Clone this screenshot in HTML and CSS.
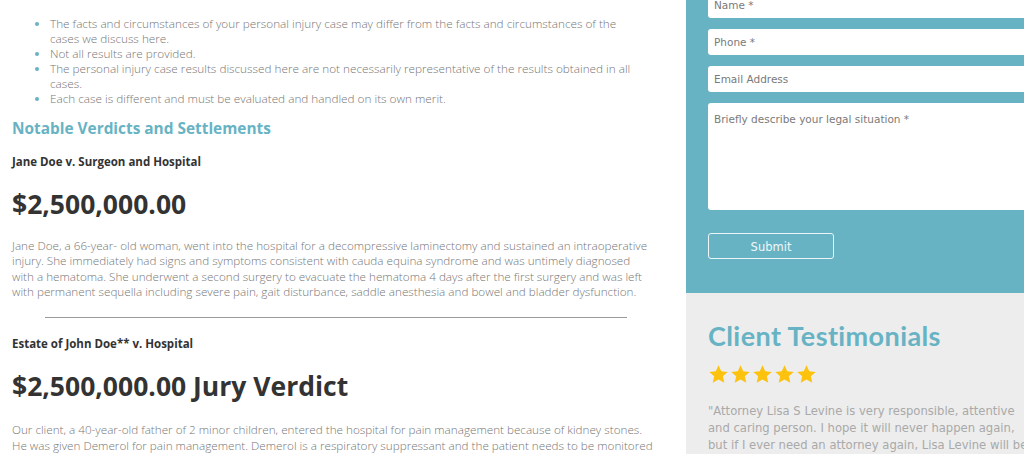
FILE: index.html
```html
<!DOCTYPE html>
<html>
<head>
<meta charset="utf-8">
<link rel="stylesheet" href="styles.css">
</head>
<body>
<div class="page">
  <main class="main">
    <ul class="disclaimers">
      <li>The facts and circumstances of your personal injury case may differ from the facts and circumstances of the cases we discuss here.</li>
      <li>Not all results are provided.</li>
      <li>The personal injury case results discussed here are not necessarily representative of the results obtained in all cases.</li>
      <li>Each case is different and must be evaluated and handled on its own merit.</li>
    </ul>
    <h2 class="section-title">Notable Verdicts and Settlements</h2>

    <h4 class="case-name">Jane Doe v. Surgeon and Hospital</h4>
    <h3 class="amount">$2,500,000.00</h3>
    <p class="case-text">Jane Doe, a 66-year- old woman, went into the hospital for a decompressive laminectomy and sustained an intraoperative injury. She immediately had signs and symptoms consistent with cauda equina syndrome and was untimely diagnosed with a hematoma. She underwent a second surgery to evacuate the hematoma 4 days after the first surgery and was left with permanent sequella including severe pain, gait disturbance, saddle anesthesia and bowel and bladder dysfunction.</p>
    <hr class="divider">

    <h4 class="case-name second">Estate of John Doe** v. Hospital</h4>
    <h3 class="amount">$2,500,000.00 Jury Verdict</h3>
    <p class="case-text last">Our client, a 40-year-old father of 2 minor children, entered the hospital for pain management because of kidney stones. He was given Demerol for pain management. Demerol is a respiratory suppressant and the patient needs to be monitored closely for signs of respiratory depression.</p>
  </main>

  <aside class="sidebar">
    <form class="contact">
      <div class="field">Name *</div>
      <div class="field">Phone *</div>
      <div class="field">Email Address</div>
      <div class="field area">Briefly describe your legal situation *</div>
      <div class="submit">Submit</div>
    </form>
    <section class="testimonials">
      <h2 class="t-title">Client Testimonials</h2>
      <div class="stars">
        <svg viewBox="0 0 24 24"><path d="M12 1.5l3.1 6.9 7.4.7-5.6 5 1.7 7.4L12 17.7l-6.6 3.8 1.7-7.4-5.6-5 7.4-.7z"/></svg>
        <svg viewBox="0 0 24 24"><path d="M12 1.5l3.1 6.9 7.4.7-5.6 5 1.7 7.4L12 17.7l-6.6 3.8 1.7-7.4-5.6-5 7.4-.7z"/></svg>
        <svg viewBox="0 0 24 24"><path d="M12 1.5l3.1 6.9 7.4.7-5.6 5 1.7 7.4L12 17.7l-6.6 3.8 1.7-7.4-5.6-5 7.4-.7z"/></svg>
        <svg viewBox="0 0 24 24"><path d="M12 1.5l3.1 6.9 7.4.7-5.6 5 1.7 7.4L12 17.7l-6.6 3.8 1.7-7.4-5.6-5 7.4-.7z"/></svg>
        <svg viewBox="0 0 24 24"><path d="M12 1.5l3.1 6.9 7.4.7-5.6 5 1.7 7.4L12 17.7l-6.6 3.8 1.7-7.4-5.6-5 7.4-.7z"/></svg>
      </div>
      <p class="quote">"Attorney Lisa S Levine is very responsible, attentive<br>and caring person. I hope it will never happen again,<br>but if I ever need an attorney again, Lisa Levine will be<br>my first call."</p>
    </section>
  </aside>
</div>
</body>
</html>
```

FILE: styles.css
```css
html, body {
  margin: 0;
  padding: 0;
  height: 454px;
  overflow: hidden;
  background: #ffffff;
}

.page {
  display: grid;
  grid-template-columns: 686px 380px;
  width: 1066px;
  font-family: "Open Sans", "Liberation Sans", sans-serif;
}

.main {
  padding: 0 31px 0 12px;
  color: #777;
}

.disclaimers {
  margin: 16px 13px 0 0;
  padding-left: 38px;
  font-size: 11.75px;
  font-weight: 300;
  line-height: 15px;
  color: #777;
}

.disclaimers li::marker {
  color: #67b3c4;
}

.section-title {
  margin: 13px 0 0;
  font-size: 15.4px;
  line-height: 20px;
  font-weight: 700;
  color: #67b3c4;
}

.case-name {
  margin: 16px 0 0;
  font-size: 11.5px;
  line-height: 14px;
  font-weight: 700;
  color: #333;
}

.case-name.second {
  margin-top: 19px;
}

.amount {
  margin: 20px 0 0;
  font-size: 26.5px;
  line-height: 30px;
  font-weight: 700;
  color: #333;
}

.case-text {
  margin: 19px 0 0;
  font-size: 11.7px;
  font-weight: 300;
  line-height: 15.4px;
  color: #777;
}

.case-text.last {
  margin-top: 20px;
  line-height: 16px;
}

.divider {
  margin: 17px 0 0 33px;
  width: 582px;
  height: 0;
  border: 0;
  border-top: 1px solid #9a9a9a;
}

.sidebar {
  display: flex;
  flex-direction: column;
  font-family: "DejaVu Sans", "Liberation Sans", sans-serif;
}

.contact {
  margin: -8px 0 0;
  padding: 0 0 34px 22px;
  background: #67b3c4;
  display: flex;
  flex-direction: column;
  gap: 11px;
}

.field {
  height: 26px;
  background: #fff;
  border-radius: 3px;
  padding: 0 6px;
  font-size: 10.5px;
  line-height: 26px;
  color: #7a7a7a;
}

.field.area {
  height: 107px;
  line-height: 14px;
  padding-top: 9px;
  box-sizing: border-box;
}

.submit {
  margin-top: 12px;
  width: 126px;
  height: 26px;
  box-sizing: border-box;
  border: 1.5px solid #eaf6f8;
  border-radius: 3px;
  color: #eef8fa;
  font-size: 11.5px;
  line-height: 23px;
  padding-top: 2px;
  text-align: center;
}

.testimonials {
  background: #ededed;
  padding: 26px 0 40px 22px;
  flex: 1;
}

.t-title {
  margin: 0;
  font-family: "Lato", "Liberation Sans", sans-serif;
  font-size: 27px;
  line-height: 34px;
  font-weight: 700;
  letter-spacing: 0.4px;
  color: #67b3c4;
}

.stars {
  display: flex;
  gap: 1px;
  margin-top: 11px;
}

.stars svg {
  width: 21px;
  height: 21px;
  fill: #fcc20e;
}

.quote {
  margin: 18px 0 0;
  font-size: 11.6px;
  line-height: 17px;
  color: #a9a9a9;
  white-space: nowrap;
}
```
